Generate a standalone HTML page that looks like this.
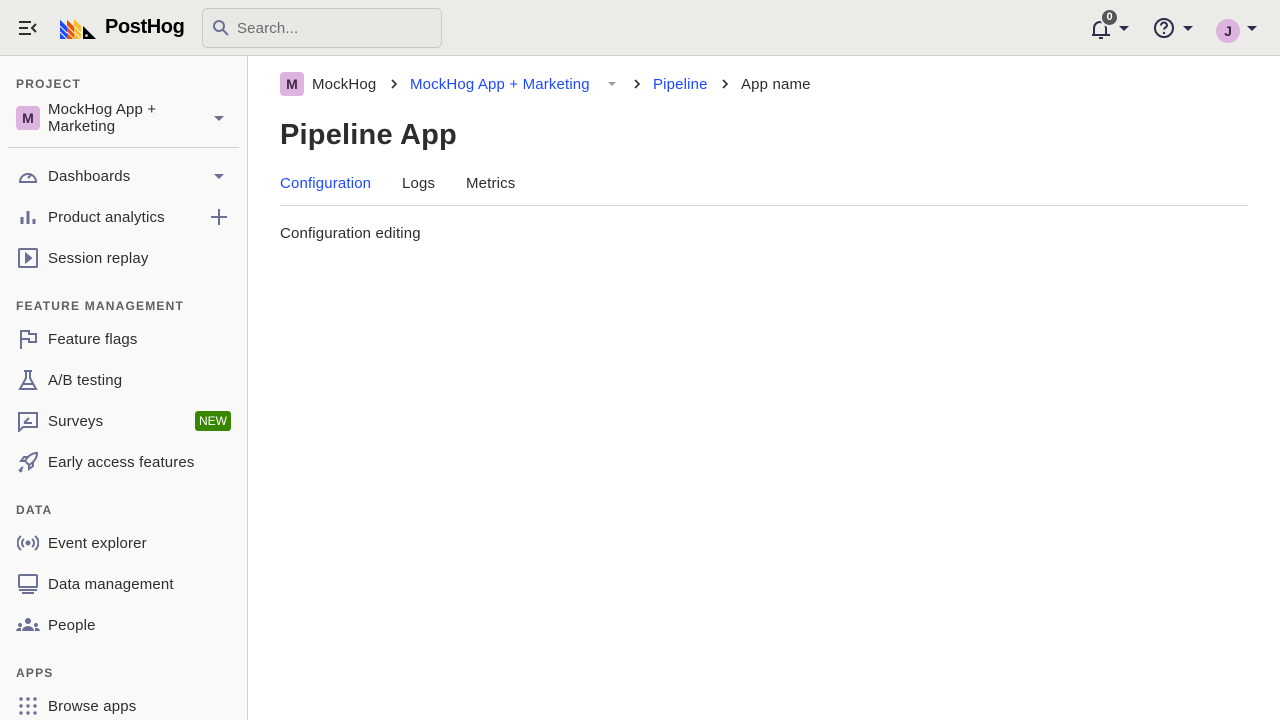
<!DOCTYPE html>
<html><head><meta charset="utf-8"><style>
*{box-sizing:border-box;margin:0;padding:0}
body{width:1280px;height:720px;overflow:hidden;font-family:"Liberation Sans",sans-serif;color:#2d2d2d;background:#fff;position:relative;font-size:14px}
.top{position:absolute;left:0;top:0;width:1280px;height:56px;background:#ebebe7;border-bottom:1px solid #d0d0cc}
.side{position:absolute;left:0;top:56px;width:248px;height:664px;background:#f9f9f7;border-right:1px solid #d0d0cc}
.abs{position:absolute}
.t{font-size:15px;letter-spacing:0.15px}
.sec{position:absolute;left:16px;font-size:12px;font-weight:bold;letter-spacing:1.2px;color:#5f5f5f}
.item{position:absolute;left:0;width:247px;height:40px;display:flex;align-items:center}
.item svg{position:absolute;left:17px}
.item span{position:absolute;left:48px;top:12px;font-size:15px;letter-spacing:0.15px;color:#2d2d2d}
.ic{fill:none;stroke:#6a7096;stroke-width:2}
.caret{width:0;height:0;border-left:5px solid transparent;border-right:5px solid transparent;border-top:5px solid #6a7096;position:absolute}
</style></head><body>
<div class="top">
 <svg class="abs" style="left:18px;top:19px" width="20" height="18" viewBox="0 0 20 18"><path d="M1 3h12M1 9h9M1 15h12M18 5l-4 4 4 4" stroke="#2d2d2d" stroke-width="2" fill="none"/></svg>
 <svg class="abs" style="left:60px;top:17px" width="38" height="22" viewBox="0 0 38 22">
  <path d="M0 2l7 7v13H0z" fill="#1d4aff"/>
  <path d="M7 2l7 7v13H7z" fill="#f54e00"/>
  <path d="M14 2l7 7v13h-7z" fill="#f9bd2b"/>
  <path d="M0 9l7 7M0 15l7 7M7 9l7 7M7 15l7 7M14 9l7 7M14 15l7 7" stroke="#ebebe7" stroke-width="1.2"/>
  <path d="M0 2L7 9M7 2l7 7" stroke="#ebebe7" stroke-width="1"/>
  <path d="M23 9l13 13H23z" fill="#000"/>
  <circle cx="26.5" cy="18.5" r="1.3" fill="#ebebe7"/>
 </svg>
 <div class="abs" style="left:105px;top:16px;font-size:20px;font-weight:bold;color:#000;letter-spacing:-0.4px">PostHog</div>
 <div class="abs" style="left:202px;top:8px;width:240px;height:40px;border:1px solid #c8c8c4;border-radius:5px;background:#e8e8e4"></div>
 <svg class="abs" style="left:212px;top:19px" width="18" height="18" viewBox="0 0 18 18"><circle cx="7" cy="7" r="5" stroke="#6a7096" stroke-width="2" fill="none"/><path d="M11 11l5 5" stroke="#6a7096" stroke-width="2"/></svg>
 <div class="abs t" style="left:237px;top:20px;color:#6b6b6b">Search...</div>
 <svg class="abs" style="left:1090px;top:17px" width="22" height="24" viewBox="0 0 22 24"><path d="M4 18V11a6 6 0 0112 0v7M2 18h18M9 21h4" stroke="#2d2d4d" stroke-width="2" fill="none"/></svg>
 <div class="abs" style="left:1100px;top:8px;width:19px;height:19px;border-radius:10px;background:#555;border:2px solid #ebebe7;color:#fff;font-size:11px;font-weight:bold;text-align:center;line-height:15px">0</div>
 <div class="caret" style="left:1119px;top:26px;border-top-color:#2d2d4d"></div>
 <svg class="abs" style="left:1153px;top:17px" width="22" height="22" viewBox="0 0 22 22"><circle cx="11" cy="11" r="9" stroke="#2d2d4d" stroke-width="2" fill="none"/><path d="M8 8.5a3 3 0 116 0c0 2-3 2-3 4" stroke="#2d2d4d" stroke-width="2" fill="none"/><circle cx="11" cy="16" r="1.2" fill="#2d2d4d"/></svg>
 <div class="caret" style="left:1183px;top:26px;border-top-color:#2d2d4d"></div>
 <div class="abs" style="left:1216px;top:19px;width:24px;height:24px;border-radius:12px;background:#ddb4e0;color:#40284a;font-weight:bold;font-size:14px;text-align:center;line-height:24px">J</div>
 <div class="caret" style="left:1247px;top:26px;border-top-color:#2d2d4d"></div>
</div>

<div class="side">
 <div class="sec" style="top:21px">PROJECT</div>
 <div class="abs" style="left:16px;top:50px;width:24px;height:24px;border-radius:4px;background:#ddb4e0;color:#40284a;font-weight:bold;font-size:14px;text-align:center;line-height:24px">M</div>
 <div class="abs t" style="left:48px;top:45px;line-height:17px">MockHog App +<br>Marketing</div>
 <div class="caret" style="left:214px;top:60px"></div>
 <div class="abs" style="left:8px;top:91px;width:231px;height:1px;background:#d0d0cc"></div>

 <div class="item" style="top:100px"><svg width="22" height="22" viewBox="0 0 22 22" class="ic"><path d="M3 17a8 8 0 1116 0zM11 13l4-4"/></svg><span>Dashboards</span><div class="caret" style="left:214px;top:18px"></div></div>
 <div class="item" style="top:141px"><svg width="22" height="22" viewBox="0 0 22 22" class="ic" style="stroke-width:3"><path d="M5 18v-7M11 18V5M17 18v-5"/></svg><span>Product analytics</span><svg width="18" height="18" viewBox="0 0 18 18" class="ic" style="left:210px"><path d="M9 1v16M1 9h16"/></svg></div>
 <div class="item" style="top:182px"><svg width="22" height="22" viewBox="0 0 22 22" class="ic"><rect x="2" y="2" width="18" height="18" rx="1"/><path d="M9 7l5 4-5 4z" fill="#6a7096"/></svg><span>Session replay</span></div>

 <div class="sec" style="top:243px">FEATURE MANAGEMENT</div>
 <div class="item" style="top:263px"><svg width="22" height="22" viewBox="0 0 22 22" class="ic"><path d="M4 21V3h8v3h7v8h-7v-3H4"/></svg><span>Feature flags</span></div>
 <div class="item" style="top:304px"><svg width="22" height="22" viewBox="0 0 22 22" class="ic"><path d="M7 2h8M9 2v7L3 20h16L13 9V2M5 15h12"/></svg><span>A/B testing</span></div>
 <div class="item" style="top:345px"><svg width="22" height="22" viewBox="0 0 22 22" class="ic"><path d="M2 21V3h18v14H6zM7 13l5-5M7 13h8"/></svg><span>Surveys</span><div class="abs" style="left:195px;top:10px;width:36px;height:20px;background:#388600;border-radius:3px;color:#fff;font-size:12px;text-align:center;line-height:20px">NEW</div></div>
 <div class="item" style="top:386px"><svg width="22" height="22" viewBox="0 0 22 22" class="ic"><path d="M20 2c0 5-3 9-8 12l-4-4C11 5 15 2 20 2zM8 10H4l3-4h4M12 14v4l4-3v-4M6 16l-4 4M5 19l-2 2"/></svg><span>Early access features</span></div>

 <div class="sec" style="top:447px">DATA</div>
 <div class="item" style="top:467px"><svg width="22" height="22" viewBox="0 0 22 22" class="ic"><circle cx="11" cy="11" r="1.5" fill="#6a7096"/><path d="M7 7a5 5 0 000 8M15 7a5 5 0 010 8M4 4a9 9 0 000 14M18 4a9 9 0 010 14"/></svg><span>Event explorer</span></div>
 <div class="item" style="top:508px"><svg width="22" height="22" viewBox="0 0 22 22" class="ic"><rect x="2" y="2" width="18" height="12" rx="1"/><path d="M2 17h18M5 20h12"/></svg><span>Data management</span></div>
 <div class="item" style="top:549px"><svg width="24" height="22" viewBox="0 0 24 22" style="left:16px"><circle cx="12" cy="7" r="3" fill="#6a7096"/><path d="M6 17a6 5 0 0112 0z" fill="#6a7096"/><circle cx="4" cy="11" r="2" fill="#6a7096"/><circle cx="20" cy="11" r="2" fill="#6a7096"/><path d="M0 17a4 3 0 015 -3v3zM24 17a4 3 0 00-5-3v3z" fill="#6a7096"/></svg><span>People</span></div>

 <div class="sec" style="top:610px">APPS</div>
 <div class="item" style="top:630px"><svg width="22" height="22" viewBox="0 0 22 22" fill="#6a7096"><circle cx="4" cy="4" r="1.7"/><circle cx="11" cy="4" r="1.7"/><circle cx="18" cy="4" r="1.7"/><circle cx="4" cy="11" r="1.7"/><circle cx="11" cy="11" r="1.7"/><circle cx="18" cy="11" r="1.7"/><circle cx="4" cy="18" r="1.7"/><circle cx="11" cy="18" r="1.7"/><circle cx="18" cy="18" r="1.7"/></svg><span>Browse apps</span></div>
</div>

<div class="abs" style="left:280px;top:72px;width:24px;height:24px;border-radius:4px;background:#ddb4e0;color:#40284a;font-weight:bold;font-size:14px;text-align:center;line-height:24px">M</div>
<div class="abs t" style="left:312px;top:76px">MockHog</div>
<svg class="abs" style="left:390px;top:79px" width="8" height="10" viewBox="0 0 8 10"><path d="M2 1l4 4-4 4" stroke="#2d2d2d" stroke-width="1.6" fill="none"/></svg>
<div class="abs t" style="left:410px;top:76px;color:#1d4aff">MockHog App + Marketing</div>
<div class="caret" style="left:608px;top:82px;border-top-color:#9a9a9a;border-width:4px 4px 0"></div>
<svg class="abs" style="left:633px;top:79px" width="8" height="10" viewBox="0 0 8 10"><path d="M2 1l4 4-4 4" stroke="#2d2d2d" stroke-width="1.6" fill="none"/></svg>
<div class="abs t" style="left:653px;top:76px;color:#1d4aff">Pipeline</div>
<svg class="abs" style="left:721px;top:79px" width="8" height="10" viewBox="0 0 8 10"><path d="M2 1l4 4-4 4" stroke="#2d2d2d" stroke-width="1.6" fill="none"/></svg>
<div class="abs t" style="left:741px;top:76px">App name</div>
<div class="abs" style="left:280px;top:119px;font-size:29px;font-weight:bold;letter-spacing:0.2px">Pipeline App</div>
<div class="abs t" style="left:280px;top:175px;color:#1d4aff">Configuration</div>
<div class="abs t" style="left:402px;top:175px">Logs</div>
<div class="abs t" style="left:466px;top:175px">Metrics</div>
<div class="abs" style="left:280px;top:205px;width:968px;height:1px;background:#d8d8d4"></div>
<div class="abs t" style="left:280px;top:225px">Configuration editing</div>
</body></html>
